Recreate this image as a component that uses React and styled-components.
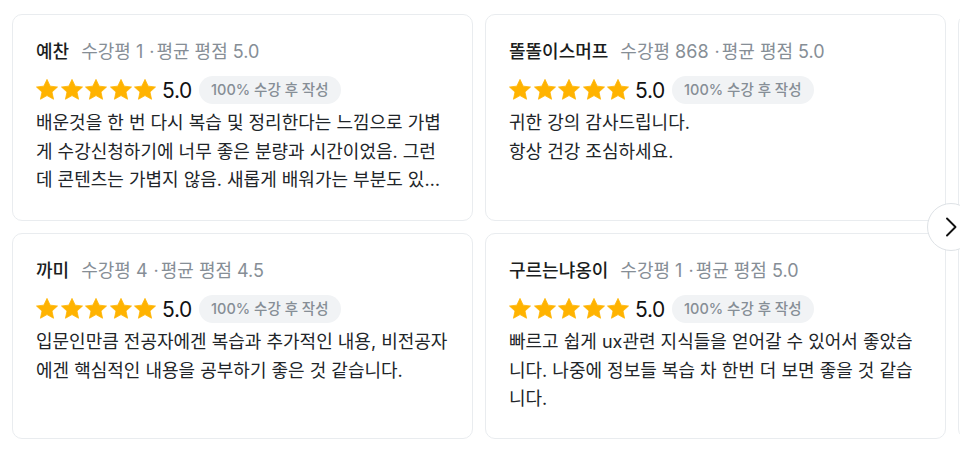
import styled, { createGlobalStyle } from "styled-components";

// column flow: each pair fills one column (top, bottom)
const reviews = [
    {
        name: "예찬",
        count: 1,
        avg: "5.0",
        rating: "5.0",
        body: "배운것을 한 번 다시 복습 및 정리한다는 느낌으로 가볍게 수강신청하기에 너무 좋은 분량과 시간이었음. 그런데 콘텐츠는 가볍지 않음. 새롭게 배워가는 부분도 있었고 실무에 도움이 많이 되었습니다.",
    },
    {
        name: "까미",
        count: 4,
        avg: "4.5",
        rating: "5.0",
        body: "입문인만큼 전공자에겐 복습과 추가적인 내용, 비전공자에겐 핵심적인 내용을 공부하기 좋은 것 같습니다.",
    },
    {
        name: "똘똘이스머프",
        count: 868,
        avg: "5.0",
        rating: "5.0",
        body: "귀한 강의 감사드립니다.\n항상 건강 조심하세요.",
    },
    {
        name: "구르는냐옹이",
        count: 1,
        avg: "5.0",
        rating: "5.0",
        body: "빠르고 쉽게 ux관련 지식들을 얻어갈 수 있어서 좋았습니다. 나중에 정보들 복습 차 한번 더 보면 좋을 것 같습니다.",
    },
    {
        name: "코딩하는곰",
        count: 12,
        avg: "4.8",
        rating: "5.0",
        body: "설명이 친절해서 이해하기 쉬웠습니다.",
    },
    {
        name: "하늘",
        count: 3,
        avg: "5.0",
        rating: "5.0",
        body: "실무에 바로 적용할 수 있는 내용이 많았어요.",
    },
];

const Star = () => (
    <svg width="22" height="22" viewBox="0.6 0.6 22.8 22.8">
        <path
            d="M12 1l3.3 7 7.6.9-5.7 5.2 1.6 7.5L12 17.8 5.2 21.6l1.6-7.5L1.1 8.9l7.6-.9z"
            fill="#ffb300"
            stroke="#ffb300"
            strokeWidth="0.8"
            strokeLinejoin="round"
        />
    </svg>
);

const ReviewCard = ({ review }) => (
    <Card>
        <Header>
            <Name>{review.name}</Name>
            <Meta>
                수강평 {review.count}
                <Dot>·</Dot>평균 평점 {review.avg}
            </Meta>
        </Header>
        <RatingRow>
            <Stars>
                {[0, 1, 2, 3, 4].map((i) => (
                    <Star key={i} />
                ))}
            </Stars>
            <Score>{review.rating}</Score>
            <Badge>100% 수강 후 작성</Badge>
        </RatingRow>
        <Body>{review.body}</Body>
    </Card>
);

const App = () => (
    <>
        <GlobalStyle />
        <Page>
            <Slider>
                <Track>
                    {reviews.map((r) => (
                        <ReviewCard key={r.name} review={r} />
                    ))}
                </Track>
                <NextButton aria-label="다음">
                    <svg width="24" height="24" viewBox="0 0 24 24" fill="none">
                        <polyline
                            points="8,3.5 16.5,12 8,20.5"
                            stroke="#111"
                            strokeWidth="1.9"
                            strokeLinecap="round"
                            strokeLinejoin="round"
                        />
                    </svg>
                </NextButton>
            </Slider>
        </Page>
    </>
);

const GlobalStyle = createGlobalStyle`
    html, body {
        margin: 0;
        background: #fff;
        overflow: hidden;
    }
    body {
        font-family: Inter, "Noto Sans CJK KR", sans-serif;
        color: #212529;
    }
`;

const Page = styled.div`
    width: 960px;
    height: 463px;
    padding: 14px 0 0 12px;
    box-sizing: border-box;
    overflow: hidden;
`;

const Slider = styled.div`
    position: relative;
    width: 948px;
`;

const Track = styled.div`
    display: grid;
    grid-template-rows: 207px 206px;
    grid-auto-flow: column;
    grid-auto-columns: 461px;
    column-gap: 12px;
    row-gap: 12px;
    overflow: hidden;
    width: 948px;
`;

const Card = styled.div`
    box-sizing: border-box;
    border: 1px solid #e9ecef;
    border-radius: 10px;
    padding: 20px 23px 0;
    background: #fff;
    display: flex;
    flex-direction: column;
    min-width: 0;
`;

const Header = styled.div`
    display: flex;
    align-items: center;
    height: 30px;
    white-space: nowrap;
`;

const Name = styled.span`
    font-size: 18px;
    font-weight: 500;
    color: #1a1d20;
    margin-right: 12px;
`;

const Meta = styled.span`
    font-size: 18px;
    color: #868e96;
`;

const Dot = styled.span`
    margin: 0 2px 0 6px;
`;

const RatingRow = styled.div`
    display: flex;
    align-items: center;
    margin-top: 11px;
    height: 28px;
`;

const Stars = styled.div`
    display: flex;
    gap: 2.5px;
`;

const Score = styled.span`
    font-size: 21px;
    color: #111;
    margin: 0 7px 0 6px;
    letter-spacing: -0.3px;
`;

const Badge = styled.span`
    height: 28px;
    line-height: 28px;
    padding: 0 12px;
    border-radius: 14px;
    background: #f1f3f5;
    color: #868e96;
    font-size: 14.5px;
    font-weight: 500;
    white-space: nowrap;
`;

const Body = styled.p`
    margin: 5px 0 0;
    font-size: 18px;
    line-height: 28.5px;
    color: #212529;
    white-space: pre-line;
    display: -webkit-box;
    -webkit-line-clamp: 3;
    -webkit-box-orient: vertical;
    overflow: hidden;
`;

const NextButton = styled.button`
    position: absolute;
    top: 189px;
    left: 915px;
    width: 48px;
    height: 48px;
    border-radius: 50%;
    border: 1px solid #dee2e6;
    background: #fff;
    display: flex;
    align-items: center;
    justify-content: center;
    padding: 0;
    cursor: pointer;
`;

export default App;
